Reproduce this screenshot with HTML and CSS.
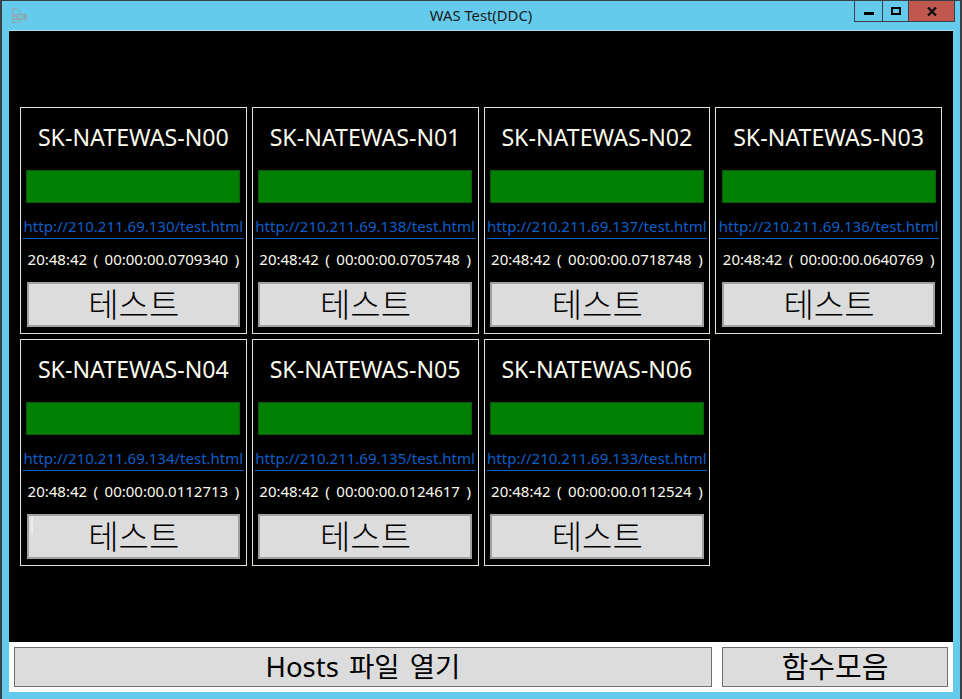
FILE: index.html
```html
<!DOCTYPE html>
<html lang="ko">
<head>
<meta charset="utf-8">
<title>WAS Test(DDC)</title>
<link rel="stylesheet" href="styles.css">
</head>
<body>
<div class="window">
  <header class="titlebar">
    <svg class="app-icon" width="17" height="16" viewBox="0 0 17 16">
      <path d="M1.5 .5H6L9 3.5V14.5H1.5Z" fill="none" stroke="#8fa6ad"/>
      <rect x="1" y="6" width="15" height="6" fill="#8fa6ad"/>
      <text x="2" y="11" class="app-icon-text">HTML</text>
    </svg>
    <span class="title">WAS Test(DDC)</span>
    <div class="caption">
      <div class="cap cap-min"><span class="glyph-min"></span></div>
      <div class="cap cap-max"><span class="glyph-max"></span></div>
      <div class="cap cap-close">
        <svg width="10" height="9" viewBox="0 0 10 9"><path d="M1 .5L9 8.5M9 .5L1 8.5" stroke="#111" stroke-width="2.4" fill="none"/></svg>
      </div>
    </div>
  </header>
  <div class="client">
    <main class="board">
      <section class="card">
        <h2 class="name">SK-NATEWAS-N00</h2><div class="status"></div>
        <a class="link" href="#">http://210.211.69.130/test.html</a>
        <p class="time">20:48:42 ( 00:00:00.0709340 )</p>
        <button class="btn btn-test">테스트</button>
      </section>
      <section class="card">
        <h2 class="name">SK-NATEWAS-N01</h2><div class="status"></div>
        <a class="link" href="#">http://210.211.69.138/test.html</a>
        <p class="time">20:48:42 ( 00:00:00.0705748 )</p>
        <button class="btn btn-test">테스트</button>
      </section>
      <section class="card">
        <h2 class="name">SK-NATEWAS-N02</h2><div class="status"></div>
        <a class="link" href="#">http://210.211.69.137/test.html</a>
        <p class="time">20:48:42 ( 00:00:00.0718748 )</p>
        <button class="btn btn-test">테스트</button>
      </section>
      <section class="card">
        <h2 class="name">SK-NATEWAS-N03</h2><div class="status"></div>
        <a class="link" href="#">http://210.211.69.136/test.html</a>
        <p class="time">20:48:42 ( 00:00:00.0640769 )</p>
        <button class="btn btn-test">테스트</button>
      </section>
      <section class="card">
        <h2 class="name">SK-NATEWAS-N04</h2><div class="status"></div>
        <a class="link" href="#">http://210.211.69.134/test.html</a>
        <p class="time">20:48:42 ( 00:00:00.0112713 )</p>
        <button class="btn btn-test btn-glow">테스트</button>
      </section>
      <section class="card">
        <h2 class="name">SK-NATEWAS-N05</h2><div class="status"></div>
        <a class="link" href="#">http://210.211.69.135/test.html</a>
        <p class="time">20:48:42 ( 00:00:00.0124617 )</p>
        <button class="btn btn-test">테스트</button>
      </section>
      <section class="card">
        <h2 class="name">SK-NATEWAS-N06</h2><div class="status"></div>
        <a class="link" href="#">http://210.211.69.133/test.html</a>
        <p class="time">20:48:42 ( 00:00:00.0112524 )</p>
        <button class="btn btn-test">테스트</button>
      </section>
    </main>
    <footer class="footer">
      <button class="btn btn-hosts">Hosts 파일 열기</button>
      <button class="btn btn-funcs">함수모음</button>
    </footer>
  </div>
</div>
</body>
</html>
```
FILE: styles.css
```css
* { box-sizing: border-box; }
html, body { margin: 0; height: 100%; }
body {
  width: 962px;
  height: 699px;
  overflow: hidden;
  font-family: "Noto Sans", "Noto Sans CJK KR", sans-serif;
  background: #65cbec;
}
.window {
  height: 699px;
  display: flex;
  flex-direction: column;
  background: #65cbec;
  border-top: 1px solid #3a4045;
  border-left: 2px solid #3a4045;
  border-right: 2px solid #3a4045;
}
.titlebar {
  height: 29px;
  flex: none;
  position: relative;
  display: flex;
  align-items: flex-start;
}
.app-icon { margin: 7px 0 0 9px; flex: none; }
.app-icon-text {
  font-family: "Liberation Sans", sans-serif;
  font-size: 4.5px;
  font-weight: 700;
  fill: #65cbec;
}
.title {
  position: absolute;
  left: 0;
  right: 0;
  top: 5px;
  text-align: center;
  font-size: 14.8px;
  line-height: 19px;
  color: #1a1a1a;
}
.caption {
  position: absolute;
  top: -1px;
  left: 852px;
  width: 101px;
  height: 22px;
  display: flex;
  border: 1px solid #3a4045;
}
.cap {
  display: flex;
  align-items: center;
  justify-content: center;
  border-right: 1px solid #3a4045;
}
.cap-min { width: 28px; }
.cap-max { width: 26px; }
.cap-close { flex: 1; background: #c0584f; border-right: 0; }
.glyph-min { width: 10px; height: 3px; background: #000; margin-top: 5px; }
.glyph-max { width: 10px; height: 8px; border: 2px solid #000; }
.client {
  flex: 1;
  margin: 0 7px 7px 7px;
  display: flex;
  flex-direction: column;
  border-top: 1px solid #b5dbe8;
  min-height: 0;
}
.board {
  flex: 1;
  background: #000;
  padding: 76px 0 0 11px;
  display: grid;
  grid-template-columns: repeat(4, 226.75px);
  grid-auto-rows: 227px;
  gap: 5px;
  align-content: start;
}
.card {
  border: 1px solid #e4e4d8;
  padding: 0 5px;
  display: flex;
  flex-direction: column;
  align-items: flex-start;
}
.name {
  margin: 0;
  width: 100%;
  height: 62px;
  font-weight: 400;
  font-size: 23.2px;
  line-height: 58px;
  text-align: center;
  color: #fbfbee;
  white-space: nowrap;
}
.status {
  width: 214px;
  height: 33px;
  margin-left: 0.25px;
  background: #008000;
  border: 1px solid #0a5c0a;
  flex: none;
}
.link {
  display: block;
  align-self: stretch;
  margin: 10px -3px 0;
  height: 26px;
  font-size: 15px;
  line-height: 27px;
  text-align: center;
  white-space: nowrap;
  color: #0d5fc8;
  text-decoration: none;
  border-bottom: 1px solid #0d5fc8;
}
.time {
  margin: 0;
  width: 100%;
  height: 43px;
  font-size: 15px;
  word-spacing: 2.6px;
  line-height: 41px;
  text-align: center;
  white-space: nowrap;
  color: #fbfbee;
}
.btn {
  font-family: "Noto Sans", "Noto Sans CJK KR", sans-serif;
  background: #dcdcdc;
  color: #000;
  border: 1px solid #707070;
  padding: 0;
}
.btn-test {
  height: 45px;
  margin: 0 0 0 0.5px;
  width: 213.5px;
  font-size: 33px;
  font-weight: 300;
  line-height: 40px;
  text-indent: 1px;
  border: 2px solid #a0a0a0;
}
.btn-glow {
  background: linear-gradient(90deg, #dcdcdc 2px, #ececec 2px, #ececec 4px, #dcdcdc 4px) no-repeat 0 0 / 100% 18px, #dcdcdc;
}
.footer {
  flex: none;
  height: 50px;
  background: #fff;
  display: flex;
  padding: 5px;
  gap: 10px;
}
.btn-hosts { width: 698px; height: 40px; font-size: 27.5px; line-height: 36px; word-spacing: 3px; }
.btn-funcs { width: 226px; height: 40px; font-size: 29px; line-height: 36px; }
```
